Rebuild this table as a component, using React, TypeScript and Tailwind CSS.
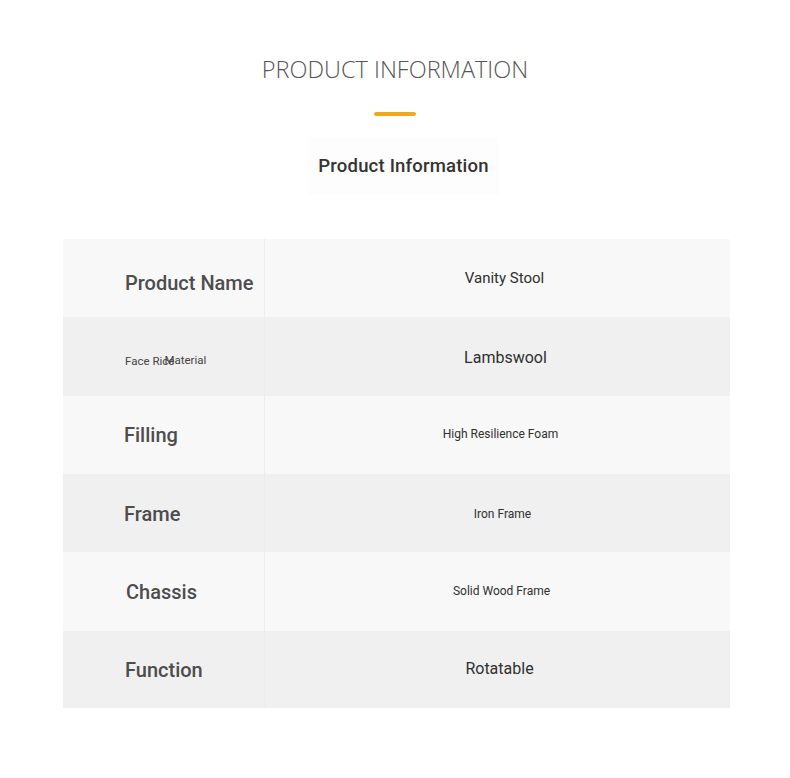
import React from 'react';

const rows = [
  { label: 'Product Name', labelClass: 'pl-[62px] translate-y-[5px]', value: 'Vanity Stool', valueClass: 'text-[15px] ml-[14px]', h: 'h-[78px]', bg: 'bg-[#f8f8f8]' },
  { label: 'material', labelClass: '', value: 'Lambswool', valueClass: 'text-[16px] ml-[16px] translate-y-[1px]', h: 'h-[79px]', bg: 'bg-[#f0f0f0]' },
  { label: 'Filling', labelClass: 'pl-[61px]', value: 'High Resilience Foam', valueClass: 'text-[12px] ml-[6px] -translate-y-[1px]', h: 'h-[78px]', bg: 'bg-[#f8f8f8]' },
  { label: 'Frame', labelClass: 'pl-[61px] translate-y-[1px]', value: 'Iron Frame', valueClass: 'text-[12px] ml-[10px] translate-y-[1px]', h: 'h-[78px]', bg: 'bg-[#f0f0f0]' },
  { label: 'Chassis', labelClass: 'pl-[63px]', value: 'Solid Wood Frame', valueClass: 'text-[12px] ml-[8px] -translate-y-[1px]', h: 'h-[79px]', bg: 'bg-[#f8f8f8]' },
  { label: 'Function', labelClass: 'pl-[62px]', value: 'Rotatable', valueClass: 'text-[16px] ml-[4px] -translate-y-[1px]', h: 'h-[77px]', bg: 'bg-[#f0f0f0]' },
];

const App = () => {
  return (
    <div className="min-h-[778px] bg-white font-['Roboto',sans-serif]">
      {/* Heading */}
      <div className="flex flex-col items-center pt-[52px]">
        <h1 className="font-['Open_Sans',sans-serif] font-light text-[23.5px] leading-[34px] text-[#555]">
          PRODUCT INFORMATION
        </h1>
        <div className="mt-[26px] h-[4px] w-[42px] rounded-full bg-[#f0a81e]" />
        <div className="mt-[21px] ml-[17px] px-[10px] py-[17px] bg-[#fdfdfd]">
          <h2 className="text-[18.5px] font-medium leading-[24px] tracking-[0.2px] text-[#333]">Product Information</h2>
        </div>
      </div>

      {/* Table */}
      <div className="mx-[63px] mt-[44px] w-[667px]">
        {rows.map((row, i) => (
          <div key={i} className={`flex ${row.h} ${row.bg}`}>
            <div className="flex w-[202px] items-center border-r border-[#ececec]">
              {row.label === 'material' ? (
                <div className="flex items-baseline pl-[62px] pt-[10px] text-[11.5px] text-[#444]">
                  <span>Face Rice</span>
                  <span className="-ml-[10px] -translate-y-[1px]">Material</span>
                </div>
              ) : (
                <span className={`text-[20px] font-medium text-[#4d4d4d] ${row.labelClass}`}>{row.label}</span>
              )}
            </div>
            <div className="flex flex-1 items-center justify-center">
              <span className={`text-[#2f2f2f] ${row.valueClass}`}>{row.value}</span>
            </div>
          </div>
        ))}
      </div>
    </div>
  );
};

export default App;
